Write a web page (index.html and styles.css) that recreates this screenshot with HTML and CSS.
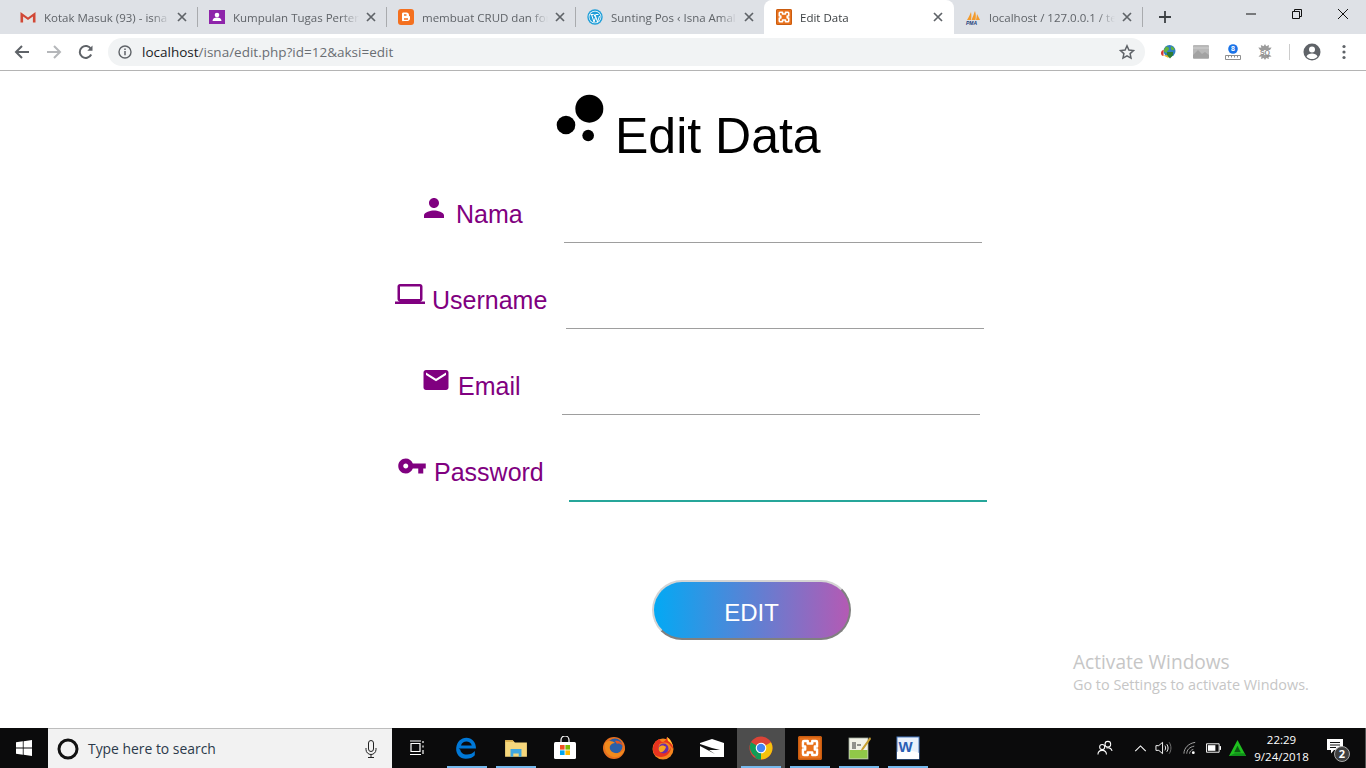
FILE: index.html
```html
<!DOCTYPE html>
<html lang="id">
<head>
<meta charset="utf-8">
<title>Edit Data</title>
<link rel="stylesheet" href="styles.css">
</head>
<body>
<svg class="sprite" aria-hidden="true">
  <symbol id="xampp" viewBox="0 0 16 16">
    <rect x="0" y="0" width="16" height="16" rx="1.500" fill="#e8711c"/>
    <rect x="0.500" y="0.500" width="15" height="15" rx="1.200" fill="none" stroke="#c95c10" stroke-width="1"/>
    <path d="M4 3.300h2.500v1.700h3V3.300H12a.7.7 0 0 1 .7.7v3h-1.500v2h1.500v3a.7.7 0 0 1-.7.7H9.500V11h-3v1.700H4a.7.7 0 0 1-.7-.7V9h1.500V7H3.300V4a.7.7 0 0 1 .7-.7z" fill="none" stroke="#fff" stroke-width="1.600" stroke-linejoin="round"/>
  </symbol>
  <symbol id="close" viewBox="0 0 10 10">
    <path d="M1 1l8 8M9 1l-8 8" stroke="#5f6368" stroke-width="1.700" fill="none"/>
  </symbol>
  <symbol id="fox" viewBox="0 0 24 24">
    <circle cx="12" cy="12" r="11" fill="#e8701f"/>
    <circle cx="13" cy="10" r="7.500" fill="#2a5fa8"/>
    <path d="M3 7c-1 6 1 12 8 14 6 1 11-3 12-9-2 4-6 6-10 5-4-1-6-4-5-7 1-2 3-3 5-3-2-2-7-3-10 0z" fill="#f08a1d"/>
    <path d="M13 5c3-1 7 1 8 5-2-2-4-3-6-2z" fill="#e8551f"/>
  </symbol>
</svg>

<header class="tabstrip">
  <div class="tab first">
    <svg class="favicon" viewBox="0 0 16 16"><rect x="0.500" y="2.500" width="15" height="11" fill="#e4e4e4"/><path d="M.5 13.500V3L8 8.500 15.500 3v10.500h-2.600V7.500L8 11 3.100 7.500v6z" fill="#d14836"/></svg>
    <span class="tab-title">Kotak Masuk (93) - isna</span>
    <svg class="tab-close"><use href="#close"/></svg>
  </div>
  <div class="tab">
    <svg class="favicon" viewBox="0 0 16 16"><rect width="16" height="14" y="1" fill="#8e24aa"/><circle cx="8" cy="6" r="2.300" fill="#fff"/><path d="M3.500 12c0-2.500 2-3.500 4.500-3.500s4.500 1 4.500 3.500z" fill="#fff"/></svg>
    <span class="tab-title">Kumpulan Tugas Perten</span>
    <svg class="tab-close"><use href="#close"/></svg>
  </div>
  <div class="tab">
    <svg class="favicon" viewBox="0 0 16 16"><rect width="16" height="16" rx="3" fill="#f4701f"/><path d="M5.500 3.500h3c1.500 0 2.500 1 2.500 2.500v1c.7 0 1 .4 1 1v1.500c0 1.500-1 2.500-2.500 2.500h-4C4.500 12.500 4 12 4 11V5c0-1 .5-1.500 1.500-1.500z" fill="#fff"/><path d="M6 6h2.500M6 10h4" stroke="#f4701f" stroke-width="1.300"/></svg>
    <span class="tab-title">membuat CRUD dan for</span>
    <svg class="tab-close"><use href="#close"/></svg>
  </div>
  <div class="tab before-active">
    <svg class="favicon" viewBox="0 0 16 16"><circle cx="8" cy="8" r="7.700" fill="#1e9ed8"/><circle cx="8" cy="8" r="6.300" fill="#fff"/><circle cx="8" cy="8" r="5.600" fill="#1e9ed8"/><path d="M3.500 5.500h3M8.500 5.500h3M4.500 5.500L7 13l1.500-4.500L7 5.500M8 5.500L10.500 13 12.500 7" stroke="#fff" stroke-width="1" fill="none"/></svg>
    <span class="tab-title">Sunting Pos ‹ Isna Amal</span>
    <svg class="tab-close"><use href="#close"/></svg>
  </div>
  <div class="tab active">
    <svg class="favicon"><use href="#xampp"/></svg>
    <span class="tab-title">Edit Data</span>
    <svg class="tab-close"><use href="#close"/></svg>
  </div>
  <div class="tab">
    <svg class="favicon" viewBox="0 0 16 16"><path d="M2 11C4 8 5 5 6 3c.5 3 .5 5 0 8zM6.500 11C8 8 9 4 10 2c1 3 1 6 .5 9zM11 11c.5-2 .8-4 1-6 1 2 2 4 3 6z" fill="#f39a2b"/><text class="pma-text" x="1" y="15.500">PMA</text></svg>
    <span class="tab-title">localhost / 127.0.0.1 / te</span>
    <svg class="tab-close"><use href="#close"/></svg>
  </div>
  <svg class="new-tab" viewBox="0 0 12 12"><path d="M6 0v12M0 6h12" stroke="#3c4043" stroke-width="1.800"/></svg>
  <div class="window-controls">
    <span class="win-btn"><svg viewBox="0 0 10 10"><path d="M0 5h10" stroke="#111" stroke-width="1"/></svg></span>
    <span class="win-btn"><svg viewBox="0 0 10 10"><path d="M.5 2.500h7v7h-7zM2.500 2.500v-2h7v7h-2" stroke="#111" stroke-width="1" fill="none"/></svg></span>
    <span class="win-btn"><svg viewBox="0 0 10 10"><path d="M0 0l10 10M10 0L0 10" stroke="#111" stroke-width="1"/></svg></span>
  </div>
</header>

<nav class="toolbar">
  <span class="tool"><svg viewBox="0 0 16 16"><path d="M15 8H2M8 2L2 8l6 6" fill="none" stroke="#5f6368" stroke-width="2"/></svg></span>
  <span class="tool"><svg viewBox="0 0 16 16"><path d="M1 8h13M8 2l6 6-6 6" fill="none" stroke="#b5b7ba" stroke-width="2"/></svg></span>
  <span class="tool"><svg viewBox="0 0 16 16"><path d="M13.200 10.500A6 6 0 1 1 13 5" fill="none" stroke="#5f6368" stroke-width="2"/><path d="M14.500 1.500v5.200H9.300z" fill="#5f6368"/></svg></span>
  <div class="omnibox">
    <svg class="info" viewBox="0 0 14 14"><circle cx="7" cy="7" r="6" fill="none" stroke="#5f6368" stroke-width="1.400"/><path d="M7 6v4.200M7 3.600v1.500" stroke="#5f6368" stroke-width="1.500"/></svg>
    <span class="url"><b>localhost</b>/isna/edit.php?id=12&amp;aksi=edit</span>
    <svg class="star" viewBox="0 0 16 16"><path d="M8 1.800l1.900 4.200 4.600.5-3.400 3.100.9 4.500L8 11.800l-4 2.300.9-4.500L1.500 6.500 6.100 6z" fill="none" stroke="#5f6368" stroke-width="1.500"/></svg>
  </div>
  <span class="tool ext-first"><svg viewBox="0 0 16 16"><circle cx="8.500" cy="7" r="6" fill="#2f7fc1"/><path d="M5 2.500c2 0 3 1 3 2.500s-2 1-2 3-3 0-3.500-1.500M10 2c1 1 3 1.500 3.500 3-1 2-3 1-3.500 0z" fill="#63b33b"/><path d="M0 9c0-2 1.500-3 2.500-3v6C1 12 0 11 0 9z" fill="#d6382e"/><path d="M2.500 11.500l5 2.500v-3z" fill="#e8b923"/><path d="M6 8h6v3l-3 3.500L6 11z" fill="#2e7d32"/></svg></span>
  <span class="tool"><svg viewBox="0 0 16 16"><rect y="1" width="16" height="14" rx="1" fill="#b8b8b8"/><path d="M0 11l5-5 4 4 3-2 4 3v3H0z" fill="#a2a2a2"/><path d="M0 4h16" stroke="#d0d0d0" stroke-width="1"/></svg></span>
  <span class="tool"><svg viewBox="0 0 16 16"><circle cx="8" cy="5" r="4.800" fill="#1a73e8"/><text class="ext-num" x="8" y="7.200">8</text><path d="M.5 11.500h15v4H.5zM3.500 11.500v2M6.500 11.500v2M9.500 11.500v2M12.500 11.500v2" fill="none" stroke="#8f8f8f" stroke-width="1"/></svg></span>
  <span class="tool"><svg viewBox="0 0 16 16"><path d="M8 0l1.200 2.300L12 1l-.4 2.800 3-.3-1.600 2.400h-10L1.300 3.500l3 .3L3.800 1l2.800 1.300zM3 11h10l1.500 1.800-3-.3.4 2.500-2.700-1.100L8 16l-1.300-2.100L4 15l.5-2.500-3 .3z" fill="#9b9b9b"/><text class="ext-sq" x="8" y="10.800">SQ</text></svg></span>
  <span class="tool-sep"></span>
  <span class="tool profile"><svg viewBox="0 0 20 20"><circle cx="10" cy="10" r="8.500" fill="#5f6368"/><circle cx="10" cy="7.500" r="3" fill="#fff"/><path d="M4.500 14.500c1-2.300 3-3 5.500-3s4.500.7 5.500 3C14 16.500 12 17 10 17s-4-.5-5.500-2.500z" fill="#fff"/></svg></span>
  <span class="tool"><svg viewBox="0 0 16 16"><circle cx="8" cy="2.500" r="1.600" fill="#5f6368"/><circle cx="8" cy="8" r="1.600" fill="#5f6368"/><circle cx="8" cy="13.500" r="1.600" fill="#5f6368"/></svg></span>
</nav>

<main class="page">
  <div class="title-row">
    <svg class="title-icon" viewBox="0 0 24 24"><circle cx="7.200" cy="14.400" r="3.200"/><circle cx="14.800" cy="18" r="2"/><circle cx="15.200" cy="8.800" r="4.800"/></svg>
    <h1 class="title">Edit Data</h1>
  </div>

  <form class="form">
    <div class="row row-nama">
      <svg class="field-icon" viewBox="0 0 24 24"><path d="M12 12c2.210 0 4-1.790 4-4s-1.790-4-4-4-4 1.790-4 4 1.790 4 4 4zm0 2c-2.670 0-8 1.340-8 4v2h16v-2c0-2.660-5.330-4-8-4z"/></svg>
      <label class="field-label">Nama</label>
      <input class="field-input" type="text">
    </div>
    <div class="row row-username">
      <svg class="field-icon" viewBox="0 0 24 24"><path d="M20 18c1.100 0 1.990-.9 1.990-2L22 6c0-1.100-.9-2-2-2H4c-1.100 0-2 .9-2 2v10c0 1.100.9 2 2 2H0v2h24v-2h-4zM4 6h16v10H4V6z"/></svg>
      <label class="field-label">Username</label>
      <input class="field-input" type="text">
    </div>
    <div class="row row-email">
      <svg class="field-icon" viewBox="0 0 24 24"><path d="M20 4H4c-1.100 0-1.990.9-1.990 2L2 18c0 1.100.9 2 2 2h16c1.100 0 2-.9 2-2V6c0-1.100-.9-2-2-2zm0 4l-8 5-8-5V6l8 5 8-5v2z"/></svg>
      <label class="field-label">Email</label>
      <input class="field-input" type="text">
    </div>
    <div class="row row-password">
      <svg class="field-icon" viewBox="0 0 24 24"><path d="M12.650 10C11.830 7.670 9.610 6 7 6c-3.310 0-6 2.690-6 6s2.690 6 6 6c2.610 0 4.830-1.670 5.650-4H17v4h4v-4h2v-4H12.650zM7 14c-1.100 0-2-.9-2-2s.9-2 2-2 2 .9 2 2-.9 2-2 2z"/></svg>
      <label class="field-label">Password</label>
      <input class="field-input is-focused" type="password">
    </div>
    <div class="actions">
      <button class="edit-btn" type="button">EDIT</button>
    </div>
  </form>

  <div class="activate">
    <div class="activate-title">Activate Windows</div>
    <div class="activate-sub">Go to Settings to activate Windows.</div>
  </div>
</main>

<footer class="taskbar">
  <span class="start"><svg viewBox="0 0 16 16"><path d="M0 2.300L6.800 1.300v6.300H0zM7.600 1.200L16 0v7.600H7.600zM0 8.400h6.800v6.300L0 13.700zM7.600 8.400H16V16l-8.400-1.200z" fill="#fff"/></svg></span>
  <div class="search">
    <svg class="cortana" viewBox="0 0 22 22"><circle cx="11" cy="11" r="9" fill="none" stroke="#111" stroke-width="3"/></svg>
    <span class="search-text">Type here to search</span>
    <svg class="mic" viewBox="0 0 12 18"><rect x="3.500" y="0.500" width="5" height="11" rx="2.500" fill="none" stroke="#222"/><path d="M1 8v1.500a5 5 0 0 0 10 0V8M6 14.500v3M3 17.500h6" fill="none" stroke="#222"/></svg>
  </div>
  <span class="app taskview"><svg viewBox="0 0 16 16"><path d="M2 3.500h9v8H2zM1 1h11M1 14.500h11M14 1v2M14 5.500v2M14 10v4" fill="none" stroke="#fff" stroke-width="1.200"/></svg></span>
  <span class="app open"><svg viewBox="0 0 20 20"><path d="M3 10.500h14.500C17.500 5 14 1.500 9.500 1.500 5 1.500 1.500 5 1 10c-.4 5 3 9 8 9 3 0 6-1 7.500-3v-3.500C15 14.500 12.500 15.500 10 15.500c-3.500 0-5.500-2-5.500-4M5 8c.5-2.500 2.500-3.500 4.500-3.500S13.500 5.500 14 8z" fill="#0078d7" fill-rule="evenodd"/></svg></span>
  <span class="app open"><svg viewBox="0 0 22 20"><path d="M1 3h7l2 2h11v13H1z" fill="#f6d77c"/><path d="M1 3h7l1 1.500H1z" fill="#e0b450"/><path d="M6 18v-7h10v7h-2.500v-3h-5v3z" fill="#3fa7e0"/></svg></span>
  <span class="app"><svg viewBox="0 0 24 24"><path d="M8 6V4a4 4 0 0 1 8 0v2" fill="none" stroke="#fff" stroke-width="1.200"/><rect x="1" y="6" width="22" height="17" rx="1.500" fill="#fff"/><rect x="7" y="9" width="4.600" height="4.600" fill="#f25022"/><rect x="12.400" y="9" width="4.600" height="4.600" fill="#7fba00"/><rect x="7" y="14.400" width="4.600" height="4.600" fill="#00a4ef"/><rect x="12.400" y="14.400" width="4.600" height="4.600" fill="#ffb900"/></svg></span>
  <span class="app"><svg><use href="#fox"/></svg></span>
  <span class="app"><svg viewBox="0 0 24 24"><circle cx="12" cy="13" r="10.500" fill="#f5861f"/><path d="M2 13c0-5 3-9 7-10 0 2 1 3 3 3 3-1 3-3 4-5 4 2 6 7 6 12l-4-5c-3-2-8-2-10 1-1 3 1 7 5 7 4 0 6-2 7-5 0 6-5 10-10 10S2 18 2 13z" fill="#e8331f"/><circle cx="12.500" cy="12.500" r="5" fill="#6b2fa8"/><path d="M8 11c2-2 5-2 7 0-1 3-3 6-6 5-1-1-2-3-1-5z" fill="#f8a51f"/><path d="M16 1c3 2 5 5 6 10-1-3-3-5-5-6z" fill="#fdd835"/></svg></span>
  <span class="app"><svg viewBox="0 0 24 18"><path d="M0 4L12 0l12 4v14H0z" fill="#fff"/><path d="M0 5l12 4 8 2-11 0 6 4L0 7z" fill="#111"/></svg></span>
  <span class="app open current"><svg viewBox="0 0 24 24"><circle cx="12" cy="12" r="11.500" fill="#db4437"/><path d="M12 12L22 6.300A11.500 11.500 0 0 1 12 23.500z" fill="#f4c20d"/><path d="M12 12l-5.200 9A11.500 11.500 0 0 1 2 6.300z" fill="#0f9d58"/><path d="M12 12l-5.800 10A11.500 11.500 0 0 0 12 23.500z" fill="#0f9d58"/><circle cx="12" cy="12" r="5.300" fill="#fff"/><circle cx="12" cy="12" r="4.200" fill="#4285f4"/></svg></span>
  <span class="app open"><svg class="app-large"><use href="#xampp"/></svg></span>
  <span class="app open"><svg viewBox="0 0 24 24"><rect x="2" y="2" width="19" height="21" fill="#f3f3e8" stroke="#9ea89a" stroke-width="0.800"/><path d="M2.500 14h18v8.500h-18z" fill="#90c848"/><path d="M6 6v7M8 6v7M10 9h4" stroke="#333" stroke-width="1"/><path d="M23 1l-8 11-1.500 3 3-1.500L24 3z" fill="#c8a030"/></svg></span>
  <span class="app open"><svg viewBox="0 0 24 24"><rect x="1" y="1" width="22" height="22" fill="#eaf1fb" stroke="#4a7cc4" stroke-width="1"/><path d="M1 16c6-2 14-2 22 1v6H1z" fill="#fff"/><text class="word-text" x="2.500" y="15.500">W</text></svg></span>
  <div class="tray">
    <span class="tray-item people"><svg viewBox="0 0 18 16"><circle cx="11.500" cy="4" r="3" fill="none" stroke="#fff" stroke-width="1.100"/><circle cx="5.500" cy="7" r="2.700" fill="none" stroke="#fff" stroke-width="1.100"/><path d="M1 15c0-3 2-4.500 4.500-4.500S10 12 10 15M10 8c2-.5 5 0 6 3" fill="none" stroke="#fff" stroke-width="1.100"/></svg></span>
    <span class="tray-item chevron"><svg viewBox="0 0 14 8"><path d="M1 7l6-6 6 6" fill="none" stroke="#fff" stroke-width="1.200"/></svg></span>
    <span class="tray-item speaker"><svg viewBox="0 0 18 14"><path d="M1 4.500h3L8 1v12L4 9.500H1z" fill="none" stroke="#fff"/><path d="M10.500 4.500c1 1.500 1 3.500 0 5M12.500 3c1.800 2.500 1.800 5.500 0 8" fill="none" stroke="#fff"/><path d="M15 1c2.500 3.500 2.500 8.500 0 12" fill="none" stroke="#777"/></svg></span>
    <span class="tray-item wifi"><svg viewBox="0 0 16 14"><path d="M1 13C1 7 6 2 13 1M4 13c0-4 3-7 8-8M7 13c0-2 1.500-4 4-4.500" fill="none" stroke="#aaa"/><circle cx="11" cy="12" r="1.500" fill="#fff"/></svg></span>
    <span class="tray-item battery"><svg viewBox="0 0 16 10"><path d="M.5.500h13.500v9H.5z" fill="none" stroke="#fff"/><rect x="2" y="2" width="8" height="6" fill="#fff"/><rect x="14.500" y="3" width="1.500" height="4" fill="#fff"/></svg></span>
    <span class="tray-item green"><svg viewBox="0 0 18 18"><path d="M9 0l9 17H0z" fill="#1fc11f"/><path d="M9 6l3.500 7h-7z" fill="#0b5d12"/><path d="M0 17h18l-2-3H6z" fill="#10901a"/></svg></span>
    <div class="clock"><span>22:29</span><span>9/24/2018</span></div>
    <span class="notify">
      <svg viewBox="0 0 16 15"><path d="M0 0h16v11H7l-3 3.500V11H0z" fill="#fff"/><path d="M3 3.500h10M3 6h10M3 8.500h6" stroke="#111"/></svg>
      <span class="badge">2</span>
    </span>
  </div>
</footer>
</body>
</html>
```
FILE: styles.css
```css
* { box-sizing: border-box; }
html, body { margin: 0; padding: 0; }
body {
  width: 1366px;
  height: 768px;
  overflow: hidden;
  display: flex;
  flex-direction: column;
  background: #fff;
  font-family: "Liberation Sans", Arial, sans-serif;
}
.sprite { display: none; }

/* Tab strip */
.tabstrip {
  height: 34px;
  flex: none;
  background: #dee1e6;
  display: flex;
  align-items: flex-start;
  padding-left: 9px;
}
.tab {
  position: relative;
  width: 189px;
  height: 34px;
  flex: none;
  display: flex;
  align-items: center;
  padding-left: 11px;
  font: 11.500px "Open Sans", "Noto Sans", sans-serif;
  color: #5f6368;
}
.tab::after {
  content: "";
  position: absolute;
  right: 0;
  top: 7px;
  width: 1px;
  height: 20px;
  background: #a9abae;
}
.tab.before-active::after, .tab.active::after { display: none; }
.tab.active {
  background: #fff;
  color: #3c4043;
  height: 38px;
  margin-left: -1px;
  width: 190px;
  padding-left: 12px;
  padding-bottom: 4px;
  border-radius: 8px 8px 0 0;
}
.favicon { width: 16px; height: 16px; flex: none; }
.pma-text { font: italic bold 5px "Liberation Sans", sans-serif; fill: #1b3a7a; }
.tab-title {
  margin-left: 8px;
  width: 128px;
  flex: none;
  white-space: nowrap;
  overflow: hidden;
  -webkit-mask-image: linear-gradient(to right, #000 108px, transparent 126px);
  mask-image: linear-gradient(to right, #000 108px, transparent 126px);
}
.tab-close { width: 10px; height: 10px; flex: none; margin-left: 5px; }
.new-tab { width: 12px; height: 12px; flex: none; margin: 11px 0 0 16px; }
.window-controls { display: flex; margin-left: auto; }
.win-btn {
  width: 46px;
  height: 28px;
  display: flex;
  align-items: center;
  justify-content: center;
}
.win-btn svg { width: 10px; height: 10px; }

/* Toolbar */
.toolbar {
  height: 37px;
  flex: none;
  display: flex;
  align-items: center;
  padding: 0 0 0 6px;
  border-bottom: 1px solid #b4b4b4;
  background: #fff;
}
.tool {
  width: 32px;
  height: 28px;
  flex: none;
  display: flex;
  align-items: center;
  justify-content: center;
}
.tool svg { width: 16px; height: 16px; }
.tool.profile svg { width: 20px; height: 20px; }
.ext-first { margin-left: 8px; }
.ext-num { font: bold 7px "Liberation Sans", sans-serif; fill: #fff; text-anchor: middle; }
.ext-sq { font: bold 7px "Liberation Sans", sans-serif; fill: #8a8a8a; text-anchor: middle; }
.tool-sep { width: 1px; height: 16px; background: #ccc; margin: 0 6px 0 8px; flex: none; }
.omnibox {
  width: 1037px;
  height: 28px;
  margin-left: 6px;
  flex: none;
  background: #f1f3f4;
  border-radius: 14px;
  display: flex;
  align-items: center;
  padding: 0 10px;
}
.info { width: 14px; height: 14px; flex: none; }
.url {
  margin-left: 10px;
  font: 13.500px "Open Sans", "Noto Sans", sans-serif;
  color: #6a6e73;
}
.url b { font-weight: 400; color: #202124; }
.star { width: 16px; height: 16px; margin-left: auto; }

/* Page */
.page { position: relative; flex: 1; background: #fff; }
.title-row {
  height: 101px;
  padding: 12px 0 0 545px;
  display: flex;
  align-items: flex-start;
}
.title-icon { width: 70px; height: 70px; flex: none; fill: #000; }
.title {
  margin: 24px 0 0;
  font-size: 50px;
  line-height: 58px;
  font-weight: 400;
  color: #000;
}
.row {
  height: 86px;
  display: flex;
  align-items: flex-start;
}
.row-nama { padding: 0 384px 0 419px; }
.row-username { padding: 0 382px 0 395px; }
.row-email { padding: 0 386px 0 421px; }
.row-password { padding: 0 379px 0 397px; }
.field-icon { width: 30px; height: 30px; flex: none; margin-top: 21px; fill: #800080; }
.field-label {
  margin: 28px 0 0 7px;
  font-size: 25px;
  line-height: 29px;
  color: #800080;
}
.field-input {
  width: 418px;
  height: 71px;
  margin-left: auto;
  border: 0;
  border-bottom: 1px solid #9e9e9e;
  background: transparent;
  outline: none;
  padding: 0;
  flex: none;
}
.field-input.is-focused { height: 72px; border-bottom: 2px solid #26a69a; }
.actions { padding: 64px 0 0 652px; }
.edit-btn {
  width: 199px;
  height: 60px;
  border: 2px outset #d4d4d4;
  border-radius: 30px;
  background: linear-gradient(to right, #03a9f4, #b45ab4);
  color: #fff;
  font: 24px "Liberation Sans", Arial, sans-serif;
  padding: 5px 0 0;
}
.activate {
  position: absolute;
  left: 1073px;
  top: 579px;
  font-family: "Open Sans", "Noto Sans", sans-serif;
  color: #c6c6c6;
  white-space: nowrap;
}
.activate-title { font-size: 19.100px; line-height: 24px; }
.activate-sub { font-size: 14.400px; line-height: 20px; margin-top: 1px; }

/* Taskbar */
.taskbar {
  height: 40px;
  flex: none;
  background: #0b0b0c;
  display: flex;
  align-items: stretch;
}
.start {
  width: 48px;
  flex: none;
  display: flex;
  align-items: center;
  justify-content: center;
}
.start svg { width: 16px; height: 16px; }
.search {
  width: 344px;
  flex: none;
  background: #f2f2f2;
  border-top: 1px solid #bdbdbd;
  display: flex;
  align-items: center;
  padding: 0 15px 0 9px;
}
.cortana { width: 22px; height: 22px; flex: none; }
.search-text {
  margin-left: 9px;
  font: 13.900px "Open Sans", "Noto Sans", sans-serif;
  color: #2b3a4a;
}
.mic { width: 12px; height: 18px; margin-left: auto; }
.app {
  position: relative;
  width: 48px;
  margin-right: 1px;
  flex: none;
  display: flex;
  align-items: center;
  justify-content: center;
}
.app svg { width: 24px; height: 24px; }
.app.taskview { width: 50px; }
.app.taskview svg { width: 16px; height: 16px; }
.app .app-large { width: 24px; height: 24px; }
.app.open::after {
  content: "";
  position: absolute;
  left: 4px;
  right: 4px;
  bottom: 0;
  height: 2px;
  background: #76b9ed;
}
.app.current { background: #4d4d4d; }
.tray { margin-left: auto; display: flex; align-items: center; height: 100%; border-right: 1px solid #555; }
.tray-item {
  height: 100%;
  flex: none;
  display: flex;
  align-items: center;
  justify-content: center;
}
.people { width: 24px; margin-right: 11px; }
.people svg { width: 17px; height: 16px; }
.chevron { width: 24px; }
.chevron svg { width: 13px; height: 7px; }
.speaker { width: 23px; margin-right: 3px; }
.speaker svg { width: 17px; height: 14px; }
.wifi { width: 24px; }
.wifi svg { width: 15px; height: 14px; }
.battery { width: 22px; margin-right: 2px; }
.battery svg { width: 15px; height: 10px; }
.green { width: 22px; margin-right: 2px; }
.green svg { width: 17px; height: 17px; }
.clock {
  width: 63px;
  display: flex;
  flex-direction: column;
  align-items: center;
  font: 11.500px/17px "Open Sans", "Noto Sans", sans-serif;
  color: #fff;
}
.notify {
  position: relative;
  width: 52px;
  height: 100%;
  flex: none;
  display: flex;
  align-items: center;
  justify-content: center;
}
.notify svg { width: 16px; height: 15px; margin: -4px 8px 0 0; }
.badge {
  position: absolute;
  left: 21px;
  top: 18px;
  width: 16px;
  height: 16px;
  border-radius: 50%;
  background: #3f3f3f;
  border: 1px solid #aaa;
  color: #fff;
  font: bold 11px/14px "Open Sans", sans-serif;
  text-align: center;
}
.word-text { font: bold 15px "Liberation Sans", sans-serif; fill: #2b5fb4; }
```
